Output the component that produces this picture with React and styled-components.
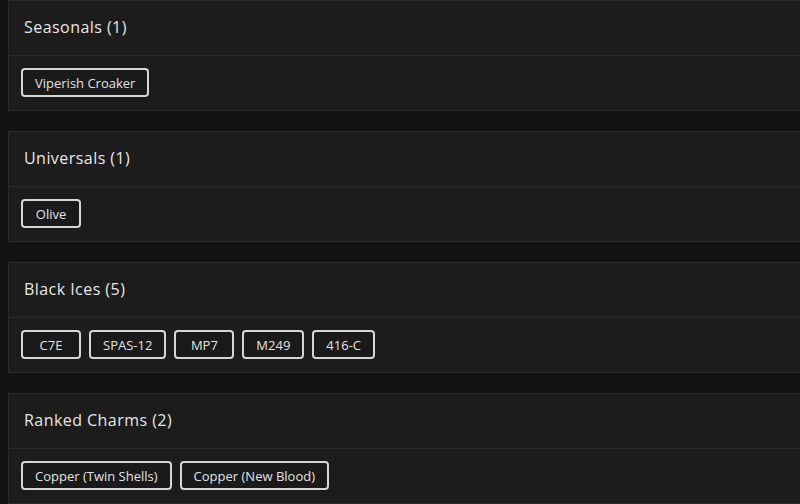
import React from 'react'
import styled, { createGlobalStyle } from 'styled-components';

const GlobalStyle = createGlobalStyle`
    html, body {
        margin: 0;
        padding: 0;
        background: #131313;
        overflow: hidden;
    }
    body {
        font-family: "Open Sans", "Liberation Sans", sans-serif;
        color: #e4e4e4;
    }
`;

const Page = styled.div`
    width: 800px;
    height: 504px;
    overflow: hidden;
    padding-left: 8px;
    box-sizing: border-box;
`;

const Card = styled.section`
    width: 820px;
    margin-bottom: 20px;
    background: #1c1c1c;
    border: 1px solid #2a2a2a;
    box-sizing: border-box;
`;

const CardHeader = styled.h2`
    margin: 0;
    height: 55px;
    display: flex;
    align-items: center;
    padding: 0 15px 2px;
    box-sizing: border-box;
    border-bottom: 1px solid #2c2c2c;
    font-size: 16px;
    font-weight: 500;
    color: #e6e6e6;
    letter-spacing: 0.45px;
`;

const CardBody = styled.div`
    display: flex;
    flex-wrap: wrap;
    gap: 8px;
    padding: 12px;
    height: 54px;
    box-sizing: border-box;
    align-items: flex-start;
`;

const Tag = styled.button`
    height: 29px;
    padding: 0 12px;
    background: #1a1a1a;
    border: 2px solid #d6d6d6;
    border-radius: 4px;
    color: #e2e2e2;
    font-family: "Open Sans", "Liberation Sans", sans-serif;
    font-size: 13px;
    min-width: ${p => p.$min || 0}px;
    cursor: pointer;
`;

const sections = [
    { title: 'Seasonals', items: ['Viperish Croaker'] },
    { title: 'Universals', items: ['Olive'] },
    { title: 'Black Ices', items: ['C7E', 'SPAS-12', 'MP7', 'M249', '416-C'] },
    { title: 'Ranked Charms', items: ['Copper (Twin Shells)', 'Copper (New Blood)'] },
];

function App() {
    return (
        <Page>
            <GlobalStyle />
            {sections.map(s =>
                <Card key={s.title}>
                    <CardHeader>{s.title} ({s.items.length})</CardHeader>
                    <CardBody>
                        {s.items.map(item =>
                            <Tag key={item} $min={60}>{item}</Tag>
                        )}
                    </CardBody>
                </Card>
            )}
        </Page>
    )
}

export default App
